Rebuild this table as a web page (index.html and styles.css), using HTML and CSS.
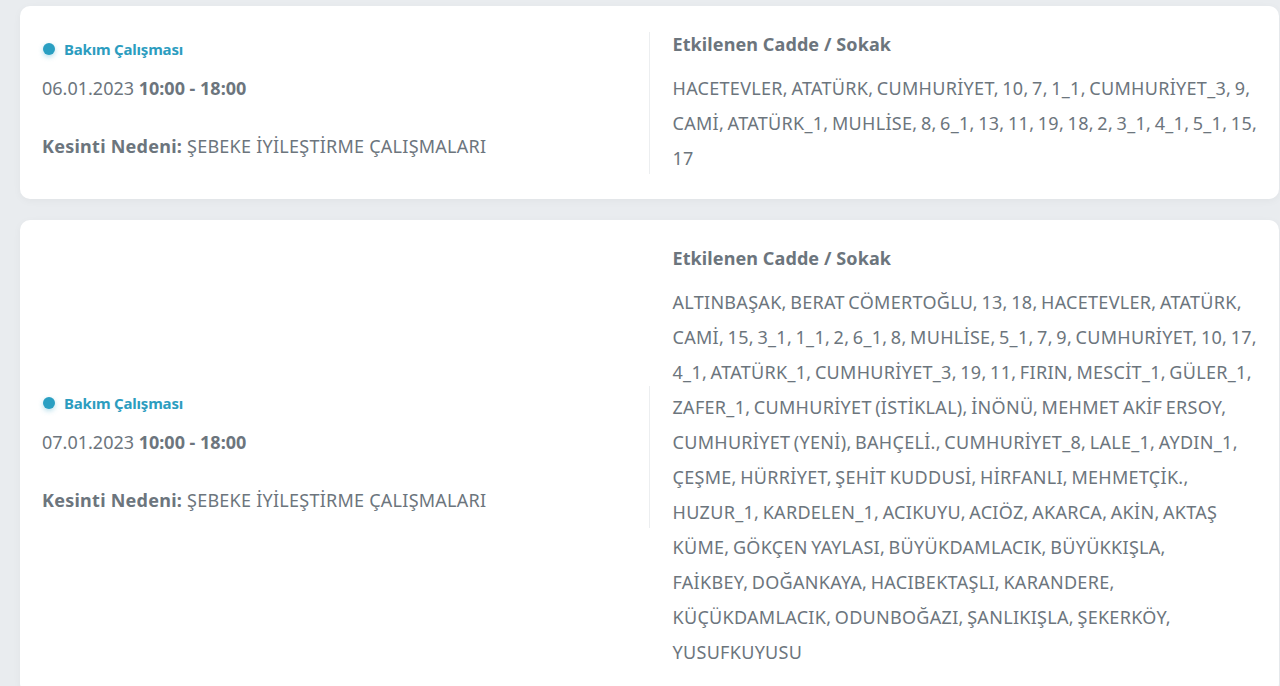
FILE: index.html
```html
<!DOCTYPE html>
<html lang="tr">
<head>
<meta charset="utf-8">
<title>Kesintiler</title>
<link rel="stylesheet" href="styles.css">
</head>
<body>
<div class="list">
  <div class="card">
    <div class="info">
      <div class="status"><span class="dot"></span>Bakım Çalışması</div>
      <div class="date">06.01.2023 <b>10:00 - 18:00</b></div>
      <div class="reason"><b>Kesinti Nedeni:</b> ŞEBEKE İYİLEŞTİRME ÇALIŞMALARI</div>
    </div>
    <div class="streets">
      <div class="streets-title">Etkilenen Cadde / Sokak</div>
      <div class="streets-list">HACETEVLER, ATATÜRK, CUMHURİYET, 10, 7, 1_1, CUMHURİYET_3, 9,<br>CAMİ, ATATÜRK_1, MUHLİSE, 8, 6_1, 13, 11, 19, 18, 2, 3_1, 4_1, 5_1, 15,<br>17</div>
    </div>
  </div>
  <div class="card">
    <div class="info">
      <div class="status"><span class="dot"></span>Bakım Çalışması</div>
      <div class="date">07.01.2023 <b>10:00 - 18:00</b></div>
      <div class="reason"><b>Kesinti Nedeni:</b> ŞEBEKE İYİLEŞTİRME ÇALIŞMALARI</div>
    </div>
    <div class="streets">
      <div class="streets-title">Etkilenen Cadde / Sokak</div>
      <div class="streets-list">ALTINBAŞAK, BERAT CÖMERTOĞLU, 13, 18, HACETEVLER, ATATÜRK,<br>CAMİ, 15, 3_1, 1_1, 2, 6_1, 8, MUHLİSE, 5_1, 7, 9, CUMHURİYET, 10, 17,<br>4_1, ATATÜRK_1, CUMHURİYET_3, 19, 11, FIRIN, MESCİT_1, GÜLER_1,<br>ZAFER_1, CUMHURİYET (İSTİKLAL), İNÖNÜ, MEHMET AKİF ERSOY,<br>CUMHURİYET (YENİ), BAHÇELİ., CUMHURİYET_8, LALE_1, AYDIN_1,<br>ÇEŞME, HÜRRİYET, ŞEHİT KUDDUSİ, HİRFANLI, MEHMETÇİK.,<br>HUZUR_1, KARDELEN_1, ACIKUYU, ACIÖZ, AKARCA, AKİN, AKTAŞ<br>KÜME, GÖKÇEN YAYLASI, BÜYÜKDAMLACIK, BÜYÜKKIŞLA,<br>FAİKBEY, DOĞANKAYA, HACIBEKTAŞLI, KARANDERE,<br>KÜÇÜKDAMLACIK, ODUNBOĞAZI, ŞANLIKIŞLA, ŞEKERKÖY,<br>YUSUFKUYUSU</div>
    </div>
  </div>
</div>
</body>
</html>
```

FILE: styles.css
```css
html, body {
  margin: 0;
  padding: 0;
}
body {
  background: #e9ecef;
  font-family: "Noto Sans", "Open Sans", sans-serif;
  color: #6c757d;
  overflow: hidden;
  height: 686px;
}
.list {
  display: flex;
  flex-direction: column;
  gap: 21px;
  padding: 6px 1px 0 20px;
}
.card {
  background: #fff;
  border-radius: 10px;
  box-shadow: 0 2px 8px rgba(0, 0, 0, 0.04);
  display: flex;
  align-items: flex-start;
  padding: 24px 0 23px;
}
.info {
  flex: 0 0 50%;
  align-self: center;
  box-sizing: border-box;
  padding: 5px 22px 14px;
  border-right: 1px solid #eceef0;
}
.status {
  display: flex;
  align-items: center;
  gap: 9px;
  font-size: 15px;
  font-weight: 700;
  color: #2c9dbf;
  line-height: 24px;
  letter-spacing: -0.2px;
}
.dot {
  width: 12px;
  height: 12px;
  border-radius: 50%;
  background: #2a9fc2;
  box-shadow: 0 2px 5px rgba(42, 159, 194, 0.35);
  margin-left: 1px;
}
.date {
  margin-top: 13px;
  font-size: 18px;
  line-height: 28px;
}
.date b, .reason b {
  font-weight: 700;
}
.reason {
  margin-top: 30px;
  font-size: 18px;
  line-height: 28px;
  letter-spacing: 0.25px;
}
.streets {
  flex: 1 1 50%;
  box-sizing: border-box;
  padding: 0 10px 0 23px;
}
.streets-title {
  font-size: 18px;
  font-weight: 700;
  line-height: 28px;
  letter-spacing: 0.1px;
  margin-bottom: 13px;
}
.streets-list {
  font-size: 18px;
  line-height: 35px;
  letter-spacing: 0.3px;
  word-spacing: -1.5px;
}
```
